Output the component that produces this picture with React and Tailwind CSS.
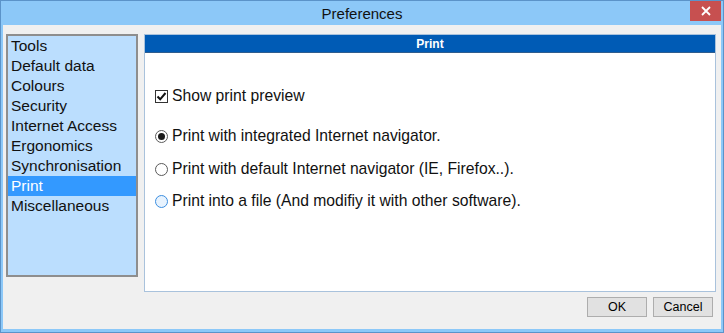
import React, { useState } from 'react';

const sections = [
  "Tools",
  "Default data",
  "Colours",
  "Security",
  "Internet Access",
  "Ergonomics",
  "Synchronisation",
  "Print",
  "Miscellaneous",
];

function Radio({ checked, hover }) {
  return (
    <span
      className={
        "flex h-[13px] w-[13px] shrink-0 items-center justify-center rounded-full border " +
        (hover ? "border-[#3c8ee0] bg-[#e8f3fe]" : "border-[#5a5a5a] bg-white")
      }
    >
      {checked && <span className="h-[7px] w-[7px] rounded-full bg-[#1a1a1a]" />}
    </span>
  );
}

export default function App() {
  const [selected, setSelected] = useState("Print");
  const [mode, setMode] = useState(0);
  const [preview, setPreview] = useState(true);

  return (
    <div
      className="flex h-[333px] w-[724px] flex-col border border-[#5b93c9] bg-[#8cc8f8] text-black"
      style={{ fontFamily: '"Liberation Sans", Arial, sans-serif' }}
    >
      {/* title bar */}
      <div className="relative flex h-[24px] shrink-0 items-center justify-center">
        <span className="text-[15px] leading-none text-[#111]">Preferences</span>
        <button className="absolute right-[2px] top-0 flex h-[20px] w-[31px] items-center justify-center bg-[#c75050] text-white">
          <svg width="10" height="10" viewBox="0 0 10 10">
            <path d="M1 1 L9 9 M9 1 L1 9" stroke="white" strokeWidth="1.8" />
          </svg>
        </button>
      </div>

      {/* client area */}
      <div className="mx-[2px] mb-[3px] flex flex-1 flex-col bg-[#f0f0f0] pl-[3px] pr-[5px] pt-[9px]">
        <div className="flex items-start gap-[6px]">
          <ul className="h-[243px] w-[132px] shrink-0 border-2 border-[#8e8e8e] bg-[#bbdefe] text-[15.5px] text-[#111]">
            {sections.map((s) => (
              <li
                key={s}
                onClick={() => setSelected(s)}
                className={
                  "h-[20px] pl-[3px] leading-[20px] " +
                  (selected === s ? "bg-[#3399ff] text-white" : "")
                }
              >
                {s}
              </li>
            ))}
          </ul>

          <div className="h-[258px] flex-1 border border-[#a9c2dc] bg-white">
            <div className="flex h-[18px] items-center justify-center border-b border-[#2f5d8e] bg-[#005bb5] text-[12px] font-bold text-white">
              Print
            </div>
            <div className="flex flex-col pl-[10px] text-[15.7px] text-[#111]">
              <label className="mt-[33px] flex h-[20px] items-center gap-[4px]" onClick={() => setPreview(!preview)}>
                <span className="flex h-[13px] w-[13px] items-center justify-center border border-[#333] bg-white">
                  {preview && (
                    <svg width="11" height="11" viewBox="0 0 11 11">
                      <path d="M1.5 5.5 L4.2 8.3 L9.5 2" fill="none" stroke="#111" strokeWidth="2" />
                    </svg>
                  )}
                </span>
                Show print preview
              </label>
              <label className="mt-[20px] flex h-[20px] items-center gap-[4px]" onClick={() => setMode(0)}>
                <Radio checked={mode === 0} />
                Print with integrated Internet navigator.
              </label>
              <label className="mt-[13px] flex h-[20px] items-center gap-[4px]" onClick={() => setMode(1)}>
                <Radio checked={mode === 1} />
                Print with default Internet navigator (IE, Firefox..).
              </label>
              <label className="mt-[12px] flex h-[20px] items-center gap-[4px]" onClick={() => setMode(2)}>
                <Radio checked={mode === 2} hover />
                Print into a file (And modifiy it with other software).
              </label>
            </div>
          </div>
        </div>

        <div className="mt-[5px] flex justify-end gap-[6px] pr-[3px]">
          <button className="h-[20px] w-[60px] border border-[#adadad] bg-[#e1e1e1] text-[12.5px]">OK</button>
          <button className="h-[20px] w-[60px] border border-[#adadad] bg-[#e1e1e1] text-[12.5px]">Cancel</button>
        </div>
      </div>
    </div>
  );
}
